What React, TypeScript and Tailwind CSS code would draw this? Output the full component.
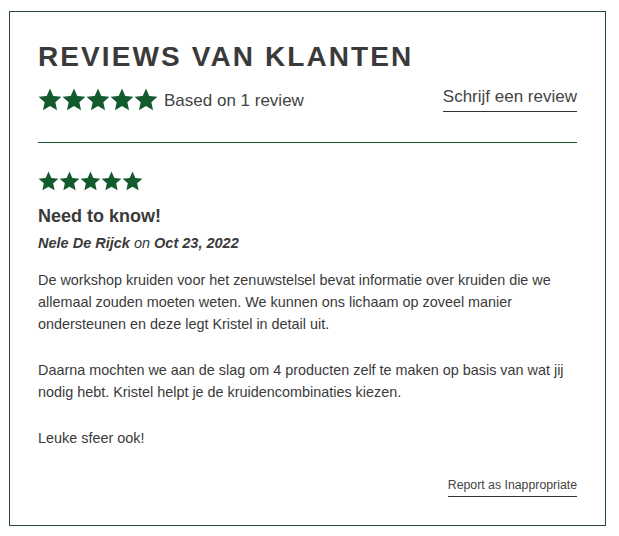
import React from 'react';

const STAR = 'M12 0.5L15.29 7.97L23.41 8.79L17.33 14.23L19.05 22.21L12 18.1L4.95 22.21L6.67 14.23L0.59 8.79L8.71 7.97Z';

function Stars({ size, gap }: { size: string; gap: string }) {
  return (
    <div className={`flex ${gap}`}>
      {[0, 1, 2, 3, 4].map(i => (
        <svg key={i} viewBox="0 0 24 23" className={`${size} fill-[#135a2e]`}>
          <path d={STAR} />
        </svg>
      ))}
    </div>
  );
}

export default function App() {
  return (
    <div className="bg-white min-h-screen pt-[11px] pl-[9px] font-['Liberation_Sans',Arial,sans-serif] text-[#3a3a3a]">
      <div className="w-[597px] h-[515px] border border-[#274b33] px-[28px] pt-[29px]">
        <h2 className="text-[28px] leading-[32px] font-bold tracking-[2.1px] text-[#3a3a3a]">REVIEWS VAN KLANTEN</h2>

        <div className="flex items-end justify-between mt-[14px] pb-[30px] border-b border-[#135a2e]">
          <div className="flex items-center gap-[6px]">
            <Stars size="w-[24px] h-[23px]" gap="gap-0" />
            <span className="text-[17px] leading-[22px] text-[#444] mt-[3px]">Based on 1 review</span>
          </div>
          <a className="text-[17px] leading-[20px] text-[#444] border-b border-[#333] pb-[4px]">Schrijf een review</a>
        </div>

        <div className="pt-[28px]">
          <Stars size="w-[21px] h-[20px]" gap="gap-0" />
          <h3 className="mt-[14px] text-[18px] leading-[22px] font-bold text-[#3a3a3a]">Need to know!</h3>
          <p className="mt-[6px] text-[14.5px] leading-[20px] italic text-[#3a3a3a]">
            <span className="font-bold">Nele De Rijck</span> on <span className="font-bold">Oct 23, 2022</span>
          </p>
          <div className="mt-[16px] text-[14.4px] leading-[22px] text-[#3a3a3a]">
            <p>De workshop kruiden voor het zenuwstelsel bevat informatie over kruiden die we allemaal zouden moeten weten. We kunnen ons lichaam op zoveel manier ondersteunen en deze legt Kristel in detail uit.</p>
            <p className="mt-[24px]">Daarna mochten we aan de slag om 4 producten zelf te maken op basis van wat jij nodig hebt. Kristel helpt je de kruidencombinaties kiezen.</p>
            <p className="mt-[24px]">Leuke sfeer ook!</p>
          </div>
          <div className="flex justify-end mt-[29px]">
            <a className="text-[12.3px] leading-[15px] text-[#444] border-b border-[#333] pb-[3px]">Report as Inappropriate</a>
          </div>
        </div>
      </div>
    </div>
  );
}
